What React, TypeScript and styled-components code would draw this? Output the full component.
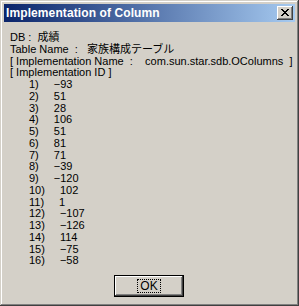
import React from "react";
import styled, { createGlobalStyle } from "styled-components";

const GlobalStyle = createGlobalStyle`
  html, body { margin: 0; padding: 0; background: #d4d0c8; }
  * { box-sizing: border-box; }
`;

const Window = styled.div`
  width: 299px;
  height: 306px;
  background: #d4d0c8;
  padding: 4px;
  display: flex;
  flex-direction: column;
  box-shadow:
    inset -1px -1px 0 #404040,
    inset 1px 1px 0 #d4d0c8,
    inset -2px -2px 0 #808080,
    inset 2px 2px 0 #ffffff;
  font-family: "Liberation Sans", "Noto Sans CJK JP", sans-serif;
  font-size: 11px;
  color: #000;
`;

const TitleBar = styled.div`
  height: 18px;
  flex: 0 0 18px;
  background: linear-gradient(to right, #0a246a, #a6caf0);
  display: flex;
  align-items: center;
  justify-content: space-between;
  padding: 0 2px 0 2px;
`;

const Title = styled.span`
  color: #fff;
  font-family: "Liberation Sans", sans-serif;
  font-weight: bold;
  font-size: 12px;
  line-height: 18px;
  letter-spacing: 0.1px;
  white-space: nowrap;
`;

const CloseButton = styled.div`
  width: 16px;
  height: 14px;
  background: #d4d0c8;
  display: flex;
  align-items: center;
  justify-content: center;
  box-shadow:
    inset -1px -1px 0 #404040,
    inset 1px 1px 0 #ffffff,
    inset -2px -2px 0 #808080;
  padding: 0 1px 1px 0;
`;

const Body = styled.div`
  flex: 1;
  display: flex;
  flex-direction: column;
  padding: 10px 0 0 6px;
`;

const Line = styled.div`
  line-height: 11.75px;
  height: 11.75px;
  white-space: pre;
`;

const ItemRow = styled.div`
  line-height: 11.75px;
  height: 11.75px;
  padding-left: 19px;
  display: flex;
  white-space: pre;
`;

const ItemLabel = styled.span`
  margin-right: 15px;
`;

const Footer = styled.div`
  display: flex;
  justify-content: center;
  padding: 0 1px 5px 0;
`;

const OkButton = styled.div`
  width: 70px;
  height: 22px;
  background: #d4d0c8;
  border: 1px solid #000;
  display: flex;
  align-items: center;
  justify-content: center;
  box-shadow:
    inset -1px -1px 0 #404040,
    inset 1px 1px 0 #ffffff,
    inset -2px -2px 0 #808080;
  padding-bottom: 1px;
`;

const Focus = styled.span`
  outline: 1px dotted #000;
  outline-offset: 0;
  padding: 0 2px;
  line-height: 12px;
  font-size: 12px;
`;

const values = [-93, 51, 28, 106, 51, 81, 71, -39, -120, 102, 1, -107, -126, 114, -75, -58];

const CloseGlyph = () => (
  <svg width="8" height="7" viewBox="0 0 8 7" shapeRendering="crispEdges">
    <path
      fill="#000"
      d="M0 0h2v1h-2zM6 0h2v1h-2zM1 1h2v1h-2zM5 1h2v1h-2zM2 2h4v1h-4zM3 3h2v1h-2zM2 4h4v1h-4zM1 5h2v1h-2zM5 5h2v1h-2zM0 6h2v1h-2zM6 6h2v1h-2z"
    />
  </svg>
);

export default function App() {
  return (
    <>
      <GlobalStyle />
      <Window>
        <TitleBar>
          <Title>Implementation of Column</Title>
          <CloseButton>
            <CloseGlyph />
          </CloseButton>
        </TitleBar>
        <Body>
          <Line>{"DB :  成績"}</Line>
          <Line>{"Table Name  :   家族構成テーブル"}</Line>
          <Line>{"[ Implementation Name  :    com.sun.star.sdb.OColumns  ]"}</Line>
          <Line>{"[ Implementation ID ]"}</Line>
          {values.map((v, i) => (
            <ItemRow key={i}>
              <ItemLabel>{`${i + 1})`}</ItemLabel>
              <span>{v < 0 ? `−${-v}` : `${v}`}</span>
            </ItemRow>
          ))}
        </Body>
        <Footer>
          <OkButton>
            <Focus>OK</Focus>
          </OkButton>
        </Footer>
      </Window>
    </>
  );
}
